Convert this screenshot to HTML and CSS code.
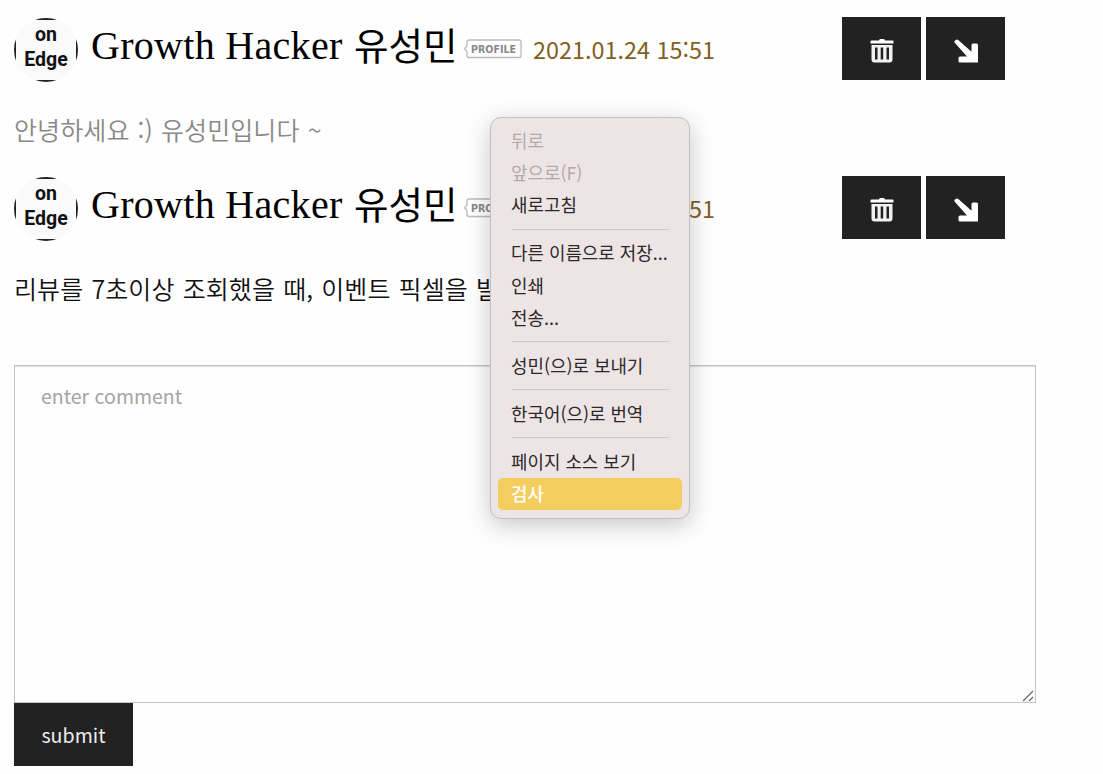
FILE: index.html
```html
<!DOCTYPE html>
<html lang="ko">
  <head>
    <meta charset="UTF-8" />
    <title>Growth Hacker 유성민</title>
    <link rel="stylesheet" href="styles.css">
  </head>
  <body>
    <div class="comments">
      <!-- 댓글 1 -->
      <div class="comment">
        <div class="comment-header">
          <div class="avatar"><span class="avatar-text">on<br>Edge</span></div>
          <div class="name"><span class="name-en">Growth Hacker</span><span class="name-ko">유성민</span></div>
          <svg class="profile" width="60" height="20" viewBox="0 0 60 20">
            <path d="M5 1H55Q57 1 57 3V16.500Q57 18.500 55 18.500H5Q3 18.500 3 16.500V12.500L0.500 9.800L3 7V3Q3 1 5 1Z" fill="#fff" stroke="#bbb" stroke-width="1.300" />
            <text x="7" y="13.500" textLength="45" lengthAdjust="spacingAndGlyphs">PROFILE</text>
          </svg>
          <span class="date">2021.01.24 15:51</span>
          <div class="actions">
            <button class="btn">
              <svg width="24" height="24" viewBox="0 0 24 24">
                <path d="M9 1.500Q9 0 10.500 0H13.500Q15 0 15 1.500H22.500Q23.500 1.500 23.500 2.500V4.500H0.500V2.500Q0.500 1.500 1.500 1.500Z" fill="#fff" />
                <path fill-rule="evenodd" d="M1.500 6H22.500V20.500Q22.500 23.500 19.500 23.500H4.500Q1.500 23.500 1.500 20.500ZM5 8.500V20.500H7.500V8.500ZM10.700 8.500V20.500H13.200V8.500ZM16.500 8.500V20.500H19V8.500Z" fill="#f1f1ef" />
              </svg>
            </button>
            <button class="btn">
              <svg width="24" height="24" viewBox="0 0 24 24">
                <path d="M0.500 3.500Q0 2.500 1 1.500L2 0.700Q3.200 0 4.300 1L17.500 12.800V6Q17.500 4.500 19 4.500H22.500Q24 4.500 24 6V23.500H6Q4.500 23.500 4.500 22V19Q4.500 17.500 6 17.500H13Z" fill="#fff" />
              </svg>
            </button>
          </div>
        </div>
        <p class="comment-text muted">안녕하세요 :) 유성민입니다 ~</p>
      </div>

      <!-- 댓글 2 -->
      <div class="comment">
        <div class="comment-header">
          <div class="avatar"><span class="avatar-text">on<br>Edge</span></div>
          <div class="name"><span class="name-en">Growth Hacker</span><span class="name-ko">유성민</span></div>
          <svg class="profile" width="60" height="20" viewBox="0 0 60 20">
            <path d="M5 1H55Q57 1 57 3V16.500Q57 18.500 55 18.500H5Q3 18.500 3 16.500V12.500L0.500 9.800L3 7V3Q3 1 5 1Z" fill="#fff" stroke="#bbb" stroke-width="1.300" />
            <text x="7" y="13.500" textLength="45" lengthAdjust="spacingAndGlyphs">PROFILE</text>
          </svg>
          <span class="date">2021.01.24 15:51</span>
          <div class="actions">
            <button class="btn">
              <svg width="24" height="24" viewBox="0 0 24 24">
                <path d="M9 1.500Q9 0 10.500 0H13.500Q15 0 15 1.500H22.500Q23.500 1.500 23.500 2.500V4.500H0.500V2.500Q0.500 1.500 1.500 1.500Z" fill="#fff" />
                <path fill-rule="evenodd" d="M1.500 6H22.500V20.500Q22.500 23.500 19.500 23.500H4.500Q1.500 23.500 1.500 20.500ZM5 8.500V20.500H7.500V8.500ZM10.700 8.500V20.500H13.200V8.500ZM16.500 8.500V20.500H19V8.500Z" fill="#f1f1ef" />
              </svg>
            </button>
            <button class="btn">
              <svg width="24" height="24" viewBox="0 0 24 24">
                <path d="M0.500 3.500Q0 2.500 1 1.500L2 0.700Q3.200 0 4.300 1L17.500 12.800V6Q17.500 4.500 19 4.500H22.500Q24 4.500 24 6V23.500H6Q4.500 23.500 4.500 22V19Q4.500 17.500 6 17.500H13Z" fill="#fff" />
              </svg>
            </button>
          </div>
        </div>
        <p class="comment-text">리뷰를 7초이상 조회했을 때, 이벤트 픽셀을 발</p>
      </div>
    </div>

    <!-- 댓글 입력 -->
    <form class="comment-form">
      <div class="input-wrap">
        <textarea placeholder="enter comment"></textarea>
        <svg class="grip" width="12" height="12" viewBox="0 0 12 12">
          <path d="M1 11L11 1M7 11L11 7" stroke="#666" stroke-width="1.200" fill="none" />
        </svg>
      </div>
      <button type="button" class="submit">submit</button>
    </form>

    <!-- 컨텍스트 메뉴 -->
    <div class="context-menu">
      <div class="menu-item disabled">뒤로</div>
      <div class="menu-item disabled">앞으로(F)</div>
      <div class="menu-item">새로고침</div>
      <hr />
      <div class="menu-item">다른 이름으로 저장...</div>
      <div class="menu-item">인쇄</div>
      <div class="menu-item">전송...</div>
      <hr />
      <div class="menu-item">성민(으)로 보내기</div>
      <hr />
      <div class="menu-item">한국어(으)로 번역</div>
      <hr />
      <div class="menu-item">페이지 소스 보기</div>
      <div class="menu-item active">검사</div>
    </div>
  </body>
</html>
```
FILE: styles.css
```css
* {
  margin: 0;
  padding: 0;
  box-sizing: border-box;
}

body {
  height: 774px;
  padding: 17px 0 0 14px;
  overflow: hidden;
  background-color: #fefefe;
  color: #111;
  font-family: 'Noto Sans CJK KR', sans-serif;
}

.comment {
  width: 991px;
  height: 159px;
}

.comment-header {
  display: flex;
  height: 63px;
}

/* 원형 프로필 이미지 */
.avatar {
  display: flex;
  justify-content: center;
  flex: none;
  width: 64px;
  height: 64px;
  margin-top: 1px;
  border-radius: 50%;
  background: linear-gradient(#fafafa, #fafafa) center / 60px 60px no-repeat #222;
}

.avatar-text {
  padding-top: 4px;
  font-family: Roboto, sans-serif;
  font-size: 19.5px;
  font-weight: 700;
  line-height: 25px;
  text-align: center;
}

.name {
  display: flex;
  flex: none;
  width: 386px;
  padding-left: 13px;
  color: #000;
  line-height: 57px;
  white-space: nowrap;
}

.name-en {
  width: 263px;
  font-family: 'Liberation Serif', serif;
  font-size: 40px;
  letter-spacing: 0.3px;
}

.name-ko {
  font-size: 37.5px;
  line-height: 54px;
}

.profile {
  flex: none;
  margin-top: 22px;
}

.profile text {
  fill: #888;
  font-family: 'DejaVu Sans', sans-serif;
  font-size: 10px;
  font-weight: 700;
}

.date {
  margin-left: 9px;
  color: #83601f;
  font-size: 23.4px;
  line-height: 64px;
  white-space: nowrap;
}

.actions {
  display: flex;
  gap: 5px;
  margin-left: auto;
}

.btn {
  display: flex;
  align-items: center;
  justify-content: center;
  width: 79px;
  height: 63px;
  padding: 5px 0 0;
  border: none;
  background-color: #222;
}

.comment-text {
  margin-top: 31px;
  font-size: 25px;
  font-weight: 350;
  letter-spacing: 0.1px;
  word-spacing: 1px;
  line-height: 36px;
  white-space: nowrap;
}

.muted {
  color: #888;
}

.comment-form {
  width: 1022px;
  margin-top: 30px;
}

.input-wrap {
  position: relative;
}

/* 크기 조절 핸들 */
.grip {
  position: absolute;
  right: 2px;
  bottom: 1px;
}

textarea {
  display: block;
  width: 1022px;
  height: 338px;
  padding: 14px 26px;
  border: 1px solid #c4c4c4;
  box-shadow: inset 0 1px 1px #ddd;
  background-color: #fefefe;
  font-family: 'Noto Sans CJK KR', sans-serif;
  font-size: 19.5px;
  line-height: 32px;
  resize: none;
}

textarea::placeholder {
  color: #a5a5a5;
}

.submit {
  display: block;
  width: 119px;
  height: 63px;
  border: none;
  background-color: #222;
  color: #eee;
  font-family: 'Noto Sans CJK KR', sans-serif;
  font-size: 19.6px;
}

.context-menu {
  position: absolute;
  top: 117px;
  left: 490px;
  width: 200px;
  height: 402px;
  padding: 7px;
  border: 1px solid #c4bfc0;
  border-radius: 11px;
  background-color: #ede4e5;
  box-shadow: 0 6px 24px rgba(0, 0, 0, 0.22);
}

.menu-item {
  height: 32.2px;
  padding-left: 13px;
  border-radius: 5px;
  color: #2b2829;
  font-size: 17.9px;
  line-height: 31.4px;
  white-space: nowrap;
}

.menu-item.disabled {
  color: #b3aaab;
}

.menu-item.active {
  font-weight: 500;
  background-color: #f4cd5f;
  color: #fff;
}

.context-menu hr {
  height: 1px;
  margin: 7.3px 13px 7.6px 14px;
  border: none;
  background-color: #d0c7c8;
}
```
